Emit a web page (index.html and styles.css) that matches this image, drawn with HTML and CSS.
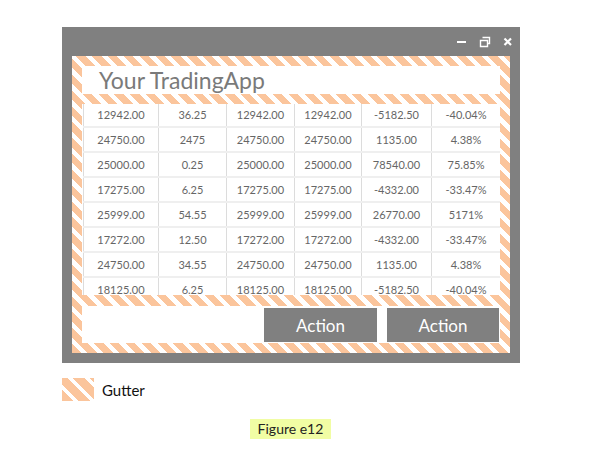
FILE: index.html
```html
<!DOCTYPE html>
<html>
<head>
<meta charset="utf-8">
<link rel="stylesheet" href="styles.css">
</head>
<body>
<div class="window">
  <div class="titlebar">
    <svg class="ico" width="10" height="12" viewBox="0 0 10 12"><rect x="0" y="5" width="9" height="2" fill="#fff"/></svg>
    <svg class="ico" width="12" height="12" viewBox="0 0 12 12"><path d="M3.5 1.5h7v6h-2M1.5 4.5h7v6h-7z" fill="none" stroke="#fff" stroke-width="1.4"/></svg>
    <svg class="ico" width="10" height="12" viewBox="0 0 10 12"><path d="M1.5 2.5l6.5 6.5M8 2.5l-6.5 6.5" stroke="#fff" stroke-width="2.2"/></svg>
  </div>
  <div class="frame">
    <div class="head">Your TradingApp</div>
    <div class="grid-wrap">
      <table class="grid">
        <colgroup><col class="c1"><col class="c2"><col class="c3"><col class="c4"><col class="c5"><col class="c6"></colgroup>
        <tr><td>12942.00</td><td>36.25</td><td>12942.00</td><td>12942.00</td><td>-5182.50</td><td>-40.04%</td></tr>
        <tr><td>24750.00</td><td>2475</td><td>24750.00</td><td>24750.00</td><td>1135.00</td><td>4.38%</td></tr>
        <tr><td>25000.00</td><td>0.25</td><td>25000.00</td><td>25000.00</td><td>78540.00</td><td>75.85%</td></tr>
        <tr><td>17275.00</td><td>6.25</td><td>17275.00</td><td>17275.00</td><td>-4332.00</td><td>-33.47%</td></tr>
        <tr><td>25999.00</td><td>54.55</td><td>25999.00</td><td>25999.00</td><td>26770.00</td><td>5171%</td></tr>
        <tr><td>17272.00</td><td>12.50</td><td>17272.00</td><td>17272.00</td><td>-4332.00</td><td>-33.47%</td></tr>
        <tr><td>24750.00</td><td>34.55</td><td>24750.00</td><td>24750.00</td><td>1135.00</td><td>4.38%</td></tr>
        <tr><td>18125.00</td><td>6.25</td><td>18125.00</td><td>18125.00</td><td>-5182.50</td><td>-40.04%</td></tr>
      </table>
    </div>
    <div class="actions">
      <button class="btn">Action</button>
      <button class="btn">Action</button>
    </div>
  </div>
</div>
<div class="legend">
  <span class="swatch"></span>
  <span class="legend-label">Gutter</span>
</div>
<div class="caption"><span class="fig">Figure e12</span></div>
</body>
</html>
```
FILE: styles.css
```css
html, body {
  margin: 0;
  padding: 0;
  background: #fff;
  font-family: Lato, "Open Sans", sans-serif;
}
.window {
  margin: 27px 0 0 62px;
  width: 458px;
  height: 336px;
  background: #808080;
  display: flex;
  flex-direction: column;
}
.titlebar {
  height: 29px;
  display: flex;
  justify-content: flex-end;
  align-items: center;
  gap: 12px;
  padding-right: 7px;
  box-sizing: border-box;
}
.ico { display: block; }
.frame {
  margin: 0 10px;
  height: 297px;
  padding: 10px;
  box-sizing: border-box;
  background: repeating-linear-gradient(45deg, #fbc59c 0 6.6px, #fff 6.6px 11.2px);
  display: flex;
  flex-direction: column;
}
.head {
  height: 28px;
  background: #fff;
  color: #7a7a7a;
  font-size: 23px;
  line-height: 28px;
  padding-left: 17px;
}
.grid-wrap {
  margin-top: 10px;
  height: 191px;
  overflow: hidden;
  background: #fff;
  padding-left: 1px;
}
.grid {
  border-collapse: collapse;
  width: 417px;
  table-layout: fixed;
  margin-top: -1px;
}
.c1 { width: 75px; } .c2 { width: 68px; } .c3 { width: 68px; }
.c4 { width: 67px; } .c5 { width: 70px; } .c6 { width: 69px; }
.grid td {
  height: 23px;
  padding: 0;
  text-align: center;
  font-size: 11px;
  color: #666;
  border-left: 1px solid #dcdcdc;
  border-bottom: 2px solid #efefef;
}
.grid td:last-child { border-right: 1px solid #e6e6e6; }
.actions {
  margin-top: 11px;
  height: 37px;
  background: #fff;
  display: flex;
  justify-content: flex-end;
  gap: 10px;
  padding: 2px 1px 1px 0;
  box-sizing: border-box;
}
.btn {
  border: 0;
  margin: 0;
  background: #808080;
  color: #fff;
  font-family: Lato, "Open Sans", sans-serif;
  font-size: 17px;
  width: 113px;
  height: 34px;
  padding: 0;
}
.btn + .btn { width: 112px; }
.legend {
  margin: 15px 0 0 62px;
  display: flex;
  align-items: center;
  gap: 8px;
}
.swatch {
  width: 32px;
  height: 23px;
  background: repeating-linear-gradient(45deg, #fbc59c 0 8px, #fff 8px 12px);
}
.legend-label {
  font-size: 15px;
  color: #111;
}
.caption {
  margin-top: 17px;
  padding-left: 250px;
}
.fig {
  display: inline-block;
  width: 81px;
  height: 20px;
  line-height: 20px;
  text-align: center;
  background: #f1fda4;
  font-size: 14px;
  color: #222;
}
```
